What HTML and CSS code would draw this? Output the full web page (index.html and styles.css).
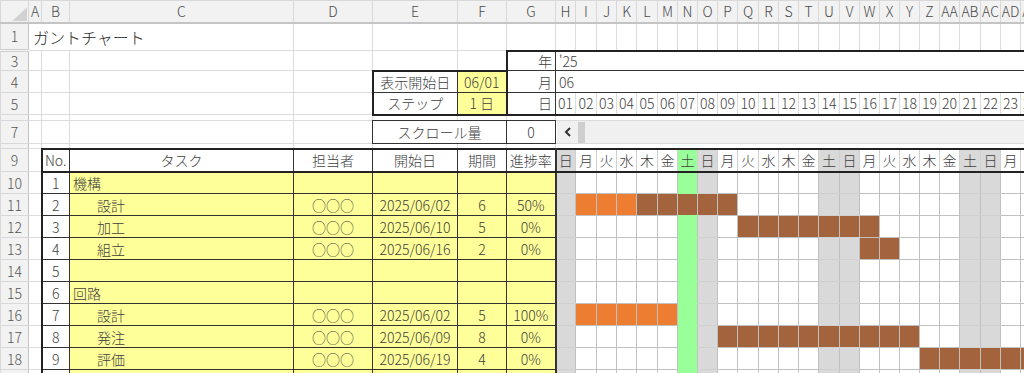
FILE: index.html
```html
<!DOCTYPE html>
<html lang="ja">
<head>
<meta charset="utf-8">
<title>ガントチャート</title>
<link rel="stylesheet" href="styles.css">
</head>
<body>
<table class="sheet">
<colgroup>
<col class="w28"><col class="w13"><col class="w28"><col class="w224"><col class="w79"><col class="w85"><col class="w49"><col class="w49">
<col class="w20 we"><col class="w21"><col class="w20"><col class="w20"><col class="w21"><col class="w20"><col class="w20 today"><col class="w20 we">
<col class="w20"><col class="w21"><col class="w20"><col class="w20"><col class="w20"><col class="w21 we"><col class="w20 we"><col class="w20">
<col class="w20"><col class="w20"><col class="w20"><col class="w20"><col class="w21 we"><col class="w20 we"><col class="w20"><col class="w20">
</colgroup>
<tr class="hdr">
<th class="corner"><span class="tri"></span></th><th>A</th><th>B</th><th>C</th><th>D</th><th>E</th><th>F</th><th>G</th>
<th>H</th><th>I</th><th>J</th><th>K</th><th>L</th><th>M</th><th>N</th><th>O</th><th>P</th><th>Q</th><th>R</th><th>S</th>
<th>T</th><th>U</th><th>V</th><th>W</th><th>X</th><th>Y</th><th>Z</th><th>AA</th><th>AB</th><th>AC</th><th>AD</th><th>AE</th>
</tr>
<tr class="r1">
<th class="rh dbl">1</th><td colspan="3" class="title">ガントチャート</td><td></td><td></td><td></td><td></td>
<td></td><td></td><td></td><td></td><td></td><td></td>
<td></td><td></td><td></td><td></td><td></td><td></td>
<td></td><td></td><td></td><td></td><td></td><td></td>
<td></td><td></td><td></td><td></td><td></td><td></td>
</tr>
<tr class="r3">
<th class="rh">3</th><td></td><td></td><td></td><td></td><td></td><td></td><td class="g3">年</td><td colspan="24" class="h3">'25</td>
</tr>
<tr class="r4">
<th class="rh">4</th><td></td><td></td><td></td><td></td><td class="e4">表示開始日</td><td class="f4">06/01</td><td class="g4">月</td><td colspan="24" class="h4">06</td>
</tr>
<tr class="r5">
<th class="rh">5</th><td></td><td></td><td></td><td></td><td class="e5">ステップ</td><td class="f5">1 日</td><td class="g5">日</td>
<td class="d">01</td><td class="d">02</td><td class="d">03</td><td class="d">04</td><td class="d">05</td><td class="d">06</td>
<td class="d">07</td><td class="d">08</td><td class="d">09</td><td class="d">10</td><td class="d">11</td><td class="d">12</td>
<td class="d">13</td><td class="d">14</td><td class="d">15</td><td class="d">16</td><td class="d">17</td><td class="d">18</td>
<td class="d">19</td><td class="d">20</td><td class="d">21</td><td class="d">22</td><td class="d">23</td><td class="d">24</td>
</tr>
<tr class="r6">
<th class="rh"></th><td></td><td></td><td></td><td></td><td></td><td></td><td></td><td colspan="24"></td>
</tr>
<tr class="r7">
<th class="rh">7</th><td></td><td></td><td></td><td></td><td colspan="2" class="sc">スクロール量</td><td class="sv">0</td>
<td colspan="24" class="sb"><div class="sbar"><svg class="arrow" width="8" height="10" viewBox="0 0 8 10"><polyline points="6,1 2,5 6,9" fill="none" stroke="#333" stroke-width="2"/></svg><span class="thumb"></span></div></td>
</tr>
<tr class="r8">
<th class="rh"></th><td></td><td></td><td></td><td></td><td></td><td></td><td></td><td colspan="24"></td>
</tr>
<tr class="gr hd9">
<th class="rh">9</th><td></td><td>No.</td><td>タスク</td><td>担当者</td><td>開始日</td><td>期間</td><td>進捗率</td>
<td>日</td><td>月</td><td>火</td><td>水</td><td>木</td><td>金</td><td>土</td><td>日</td><td>月</td><td>火</td><td>水</td><td>木</td>
<td>金</td><td>土</td><td>日</td><td>月</td><td>火</td><td>水</td><td>木</td><td>金</td><td>土</td><td>日</td><td>月</td><td>火</td>
</tr>
<tr class="gr bd">
<th class="rh">10</th><td></td><td>1</td><td>機構</td><td></td><td></td><td></td><td></td>
<td></td><td></td><td></td><td></td><td></td><td></td><td></td><td></td><td></td><td></td><td></td><td></td>
<td></td><td></td><td></td><td></td><td></td><td></td><td></td><td></td><td></td><td></td><td></td><td></td>
</tr>
<tr class="gr bd">
<th class="rh">11</th><td></td><td>2</td><td class="sub">設計</td><td>○○○</td><td>2025/06/02</td><td>6</td><td>50%</td>
<td></td><td class="o"></td><td class="o"></td><td class="o"></td><td class="b"></td><td class="b"></td><td class="b"></td><td class="b"></td><td class="b"></td><td></td><td></td><td></td>
<td></td><td></td><td></td><td></td><td></td><td></td><td></td><td></td><td></td><td></td><td></td><td></td>
</tr>
<tr class="gr bd">
<th class="rh">12</th><td></td><td>3</td><td class="sub">加工</td><td>○○○</td><td>2025/06/10</td><td>5</td><td>0%</td>
<td></td><td></td><td></td><td></td><td></td><td></td><td></td><td></td><td></td><td class="b"></td><td class="b"></td><td class="b"></td>
<td class="b"></td><td class="b"></td><td class="b"></td><td class="b"></td><td></td><td></td><td></td><td></td><td></td><td></td><td></td><td></td>
</tr>
<tr class="gr bd">
<th class="rh">13</th><td></td><td>4</td><td class="sub">組立</td><td>○○○</td><td>2025/06/16</td><td>2</td><td>0%</td>
<td></td><td></td><td></td><td></td><td></td><td></td><td></td><td></td><td></td><td></td><td></td><td></td>
<td></td><td></td><td></td><td class="b"></td><td class="b"></td><td></td><td></td><td></td><td></td><td></td><td></td><td></td>
</tr>
<tr class="gr bd">
<th class="rh">14</th><td></td><td>5</td><td></td><td></td><td></td><td></td><td></td>
<td></td><td></td><td></td><td></td><td></td><td></td><td></td><td></td><td></td><td></td><td></td><td></td>
<td></td><td></td><td></td><td></td><td></td><td></td><td></td><td></td><td></td><td></td><td></td><td></td>
</tr>
<tr class="gr bd">
<th class="rh">15</th><td></td><td>6</td><td>回路</td><td></td><td></td><td></td><td></td>
<td></td><td></td><td></td><td></td><td></td><td></td><td></td><td></td><td></td><td></td><td></td><td></td>
<td></td><td></td><td></td><td></td><td></td><td></td><td></td><td></td><td></td><td></td><td></td><td></td>
</tr>
<tr class="gr bd">
<th class="rh">16</th><td></td><td>7</td><td class="sub">設計</td><td>○○○</td><td>2025/06/02</td><td>5</td><td>100%</td>
<td></td><td class="o"></td><td class="o"></td><td class="o"></td><td class="o"></td><td class="o"></td><td></td><td></td><td></td><td></td><td></td><td></td>
<td></td><td></td><td></td><td></td><td></td><td></td><td></td><td></td><td></td><td></td><td></td><td></td>
</tr>
<tr class="gr bd">
<th class="rh">17</th><td></td><td>8</td><td class="sub">発注</td><td>○○○</td><td>2025/06/09</td><td>8</td><td>0%</td>
<td></td><td></td><td></td><td></td><td></td><td></td><td></td><td></td><td class="b"></td><td class="b"></td><td class="b"></td><td class="b"></td>
<td class="b"></td><td class="b"></td><td class="b"></td><td class="b"></td><td class="b"></td><td class="b"></td><td></td><td></td><td></td><td></td><td></td><td></td>
</tr>
<tr class="gr bd">
<th class="rh">18</th><td></td><td>9</td><td class="sub">評価</td><td>○○○</td><td>2025/06/19</td><td>4</td><td>0%</td>
<td></td><td></td><td></td><td></td><td></td><td></td><td></td><td></td><td></td><td></td><td></td><td></td>
<td></td><td></td><td></td><td></td><td></td><td></td><td class="b"></td><td class="b"></td><td class="b"></td><td class="b"></td><td class="b"></td><td class="b"></td>
</tr>
<tr class="gr bd">
<th class="rh">19</th><td></td><td>10</td><td></td><td></td><td></td><td></td><td></td>
<td></td><td></td><td></td><td></td><td></td><td></td><td></td><td></td><td></td><td></td><td></td><td></td>
<td></td><td></td><td></td><td></td><td></td><td></td><td></td><td></td><td></td><td></td><td></td><td></td>
</tr>
</table>
</body>
</html>
```
FILE: styles.css
```css
html, body {
  margin: 0;
  padding: 0;
  background: #fff;
  overflow: hidden;
}
body {
  width: 1024px;
  height: 373px;
}
.sheet {
  border-collapse: collapse;
  table-layout: fixed;
  width: 1040px;
  font-family: "Noto Sans CJK JP", "Noto Sans", sans-serif;
  font-size: 14px;
  font-weight: 300;
  color: #404040;
}
.sheet th,
.sheet td {
  padding: 0 3px;
  border: 1px solid #dcdcdc;
  background: #fff;
  white-space: nowrap;
  line-height: 16px;
  font-weight: 300;
  text-align: left;
  vertical-align: middle;
}

/* column widths */
.w28 { width: 28px; }
.w13 { width: 13px; }
.w224 { width: 224px; }
.w79 { width: 79px; }
.w85 { width: 85px; }
.w49 { width: 49px; }
.w20 { width: 20px; }
.w21 { width: 21px; }
.we { background: #d9d9d9; }
.today { background: #99ff99; }

/* excel headers */
.hdr { height: 22px; }
.sheet .hdr th {
  padding: 0;
  background: #f2f2f2;
  color: #4a4a4a;
  text-align: center;
  border-color: #d8d8d8;
  border-bottom: 2px solid #c4c4c4;
}
.sheet th.rh {
  padding: 0;
  background: #f2f2f2;
  color: #555;
  text-align: center;
  border-color: #d8d8d8;
  border-right: 1px solid #c4c4c4;
}
.sheet th.dbl { border-bottom: 3px double #cfcfcf; }
.tri {
  display: block;
  width: 15px;
  height: 14px;
  margin: 6px 1px 0 auto;
  background: #d2d2d2;
  clip-path: polygon(100% 0, 100% 100%, 0 100%);
}

/* row heights */
.r1 { height: 28px; }
.r3 { height: 20px; }
.r4 { height: 22px; }
.r5 { height: 22px; }
.r6 { height: 6px; }
.r7 { height: 23px; }
.r8 { height: 5px; }
.hd9 { height: 23px; }
.bd { height: 22px; }

.sheet td.title {
  font-size: 16px;
  color: #1e1e1e;
  padding-left: 4px;
}

/* settings box rows 3-5 */
.sheet td.g3 {
  text-align: right;
  border-top: 2px solid #222;
  border-left: 2px solid #222;
  border-right: 1px double #333;
  border-bottom: 1px double #333;
}
.sheet td.h3 {
  border-top: 2px solid #222;
  border-bottom: 1px double #333;
}
.sheet td.e4 {
  text-align: center;
  border-top: 2px solid #222;
  border-left: 2px solid #222;
  border-right: 1px double #333;
  border-bottom: 1px double #333;
}
.sheet td.f4 {
  text-align: center;
  background: #ffff99;
  border-top: 2px solid #222;
  border-right: 2px solid #222;
  border-bottom: 1px double #333;
}
.sheet td.g4 {
  text-align: right;
  border-left: 2px solid #222;
  border-right: 1px double #333;
  border-bottom: 1px double #333;
}
.sheet td.h4 { border-bottom: 1px double #333; }
.sheet td.e5 {
  text-align: center;
  border-left: 2px solid #222;
  border-right: 1px double #333;
  border-bottom: 2px solid #222;
}
.sheet td.f5 {
  text-align: center;
  background: #ffff99;
  border-right: 2px solid #222;
  border-bottom: 2px solid #222;
}
.sheet td.g5 {
  text-align: right;
  border-left: 2px solid #222;
  border-right: 1px double #333;
  border-bottom: 2px solid #222;
}
.sheet td.d {
  padding: 0;
  text-align: center;
  border-bottom: 2px solid #222;
}

/* scroll row */
.sheet td.sc,
.sheet td.sv {
  text-align: center;
  border: 1px double #333;
}
.sheet td.sb { padding: 0; }
.sbar {
  display: flex;
  align-items: center;
  height: 22px;
  margin-left: 1px;
  background: #f0f0f0;
}
.arrow { margin-left: 7px; }
.thumb {
  width: 7px;
  height: 21px;
  margin-left: 6px;
  background: #cfcfcf;
}

/* task table */
.gr > :nth-child(n+3):nth-child(-n+8) {
  text-align: center;
  padding: 0;
  border: 1px double #333;
}
.sheet .gr > :nth-child(3) { border-left: 2px solid #222; }
.sheet .gr > :nth-child(8) { border-right: 2px solid #333; }
.sheet .bd > :nth-child(n+4):nth-child(-n+8) { background: #ffff99; }
.sheet .bd > :nth-child(4) {
  text-align: left;
  padding-left: 3px;
}
.sheet .bd > td.sub { padding-left: 27px; }
.sheet .hd9 > :nth-child(n+3) {
  border-top: 2px solid #222;
  border-bottom: 2px solid #222;
}
.sheet .hd9 > :nth-child(n+9) {
  padding: 0;
  text-align: center;
  background: transparent;
  border-left: 1px solid #d0d0d0;
  border-right: 1px solid #d0d0d0;
}

/* gantt body */
.sheet .bd > :nth-child(n+9) {
  padding: 0;
  background: transparent;
  border: 1px solid #c0c0c0;
}
.sheet .bd > :nth-child(9),
.sheet .bd > :nth-child(16),
.sheet .bd > :nth-child(22),
.sheet .bd > :nth-child(23),
.sheet .bd > :nth-child(29),
.sheet .bd > :nth-child(30) {
  border-top-color: #d0d0d0;
  border-bottom-color: #d0d0d0;
}
.sheet .bd > :nth-child(15) {
  border-top-color: #99ff99;
  border-bottom-color: #99ff99;
}
.sheet .bd > td.o { background: #ed7d31; }
.sheet .bd > td.b { background: #a2633d; }
```
